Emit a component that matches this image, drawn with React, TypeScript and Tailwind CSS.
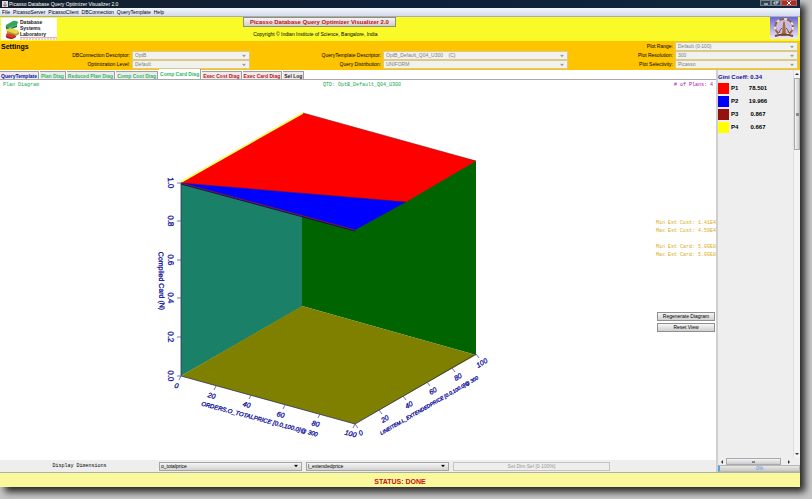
import { useState, type ReactNode } from 'react'
import clsx from 'clsx'

const menus = ['File', 'PicassoServer', 'PicassoClient', 'DBConnection', 'QueryTemplate', 'Help']

const tabs = [
  { name: 'QueryTemplate', color: 'text-[#1010b0]' },
  { name: 'Plan Diag', color: 'text-[#30b868]' },
  { name: 'Reduced Plan Diag', color: 'text-[#30b868]' },
  { name: 'Comp Cost Diag', color: 'text-[#30b868]' },
  { name: 'Comp Card Diag', color: 'text-[#30b868]' },
  { name: 'Exec Cost Diag', color: 'text-[#c81018]' },
  { name: 'Exec Card Diag', color: 'text-[#c81018]' },
  { name: 'Sel Log', color: 'text-[#401818]' },
]

const plans = [
  { name: 'P1', value: '78.501', color: 'bg-[#ff0000]' },
  { name: 'P2', value: '19.966', color: 'bg-[#0000ff]' },
  { name: 'P3', value: '0.867', color: 'bg-[#961010]' },
  { name: 'P4', value: '0.667', color: 'bg-[#ffff00]' },
]

const zTicks = [
  { label: '0.0', y: 376 },
  { label: '0.2', y: 337 },
  { label: '0.4', y: 298 },
  { label: '0.6', y: 260 },
  { label: '0.8', y: 221 },
  { label: '1.0', y: 183 },
]

const xTicks = [
  { label: '0', x: 181, y: 376 },
  { label: '20', x: 216, y: 386 },
  { label: '40', x: 251, y: 395 },
  { label: '60', x: 285, y: 405 },
  { label: '80', x: 320, y: 414 },
  { label: '100', x: 355, y: 424 },
]

const yTicks = [
  { label: '0', x: 355, y: 424 },
  { label: '20', x: 379, y: 410 },
  { label: '40', x: 403, y: 396 },
  { label: '60', x: 427, y: 382 },
  { label: '80', x: 452, y: 368 },
  { label: '100', x: 476, y: 354 },
]

function DropArrow({ className }: { className: string }) {
  return (
    <svg viewBox="0 0 6 4" className={clsx('pointer-events-none absolute right-1 top-1/2 h-[3px] w-[4px] -translate-y-1/2', className)}>
      <path d="M0 0h6L3 4z" fill="currentColor" />
    </svg>
  )
}

function Setting({ id, label, value }: { id: string; label: string; value: string }) {
  return (
    <>
      <label htmlFor={id} className="text-right">{label}</label>
      <div className="relative ml-[2px]">
        <select
          id={id}
          disabled
          className="block h-[9px] w-full appearance-none border border-[#d9c98a] bg-[#f1f1ee] pl-[2px] text-[5px] leading-[7px] text-[#808080] opacity-100"
        >
          <option>{value}</option>
        </select>
        <DropArrow className="text-[#999]" />
      </div>
    </>
  )
}

function DimensionSelect({ label, value }: { label: string; value: string }) {
  return (
    <div className="relative mr-1">
      <select
        aria-label={label}
        className="block h-[9px] w-full appearance-none border border-[#a5a5a5] bg-linear-to-b from-[#f4f4f4] to-[#d4d4d4] pl-[1px] text-[5px] leading-[7px] text-black"
      >
        <option>{value}</option>
      </select>
      <DropArrow className="text-black" />
    </div>
  )
}

function ActionButton({ children }: { children: ReactNode }) {
  return (
    <button className="h-[9px] border border-[#8f8f8f] bg-linear-to-b from-[#f6f6f6] to-[#d0d0d0] text-[5px] leading-[7px] text-black">
      {children}
    </button>
  )
}

function LabLogo() {
  return (
    <div className="flex h-[22px] w-[56px] items-center bg-white">
      <svg viewBox="0 0 19 21" className="h-[21px] w-[19px] shrink-0">
        <path d="M5 6l7-4q3-1 5 1l-1 3-8 3q-4 0-3-3z" fill="#35a55a" />
        <path d="M5 7q1 2 4 2l7-3v2l-8 3q-4 0-3-4z" fill="#187a3c" />
        <path d="M6 10l3-1 7 2q3 1 1 3l-2 1-8-2q-3-1-1-3z" fill="#e8d548" />
        <path d="M6 12l9 3 3-2v2l-3 2-9-3z" fill="#b29c20" />
        <path d="M6 14l8 2 1 2-4 2-5-1q-2-1-1-3z" fill="#d83a2a" />
        <path d="M5 17l6 2 4-2v1l-4 2-5-1z" fill="#9c1c18" />
      </svg>
      <div className="text-[5px] font-bold leading-[6px] text-[#222]">
        <div>Database</div>
        <div>Systems</div>
        <div>Laboratory</div>
        <svg viewBox="0 0 37 3" className="h-[3px] w-[37px]">
          <path d="M0 0h37" stroke="#d8604c" />
          <path d="M0 2h37" stroke="#c8a498" strokeDasharray="2 1" />
        </svg>
      </div>
    </div>
  )
}

function InstituteLogo() {
  return (
    <svg viewBox="0 0 28 22" className="h-[22px] w-[28px]">
      <defs>
        <linearGradient id="sky" x2="0" y2="1">
          <stop stopColor="#6868d8" />
          <stop offset="1" stopColor="#f4e8f8" />
        </linearGradient>
      </defs>
      <rect width="28" height="22" fill="url(#sky)" />
      <ellipse cx="14" cy="10" rx="9" ry="8" fill="#c8bce8" stroke="#94603c" strokeWidth="2" />
      <ellipse cx="14" cy="10" rx="9" ry="8" fill="none" stroke="#f0e4d0" strokeWidth="2" strokeDasharray="3 5" />
      <path d="M12 17l1-11 1-2 1 2 1 11z" fill="#a86c38" />
      <path d="M9 16q1-4 3-5M19 16q-1-4-3-5" fill="none" stroke="#805030" />
      <path d="M5 19q9-3 18 0" fill="none" stroke="#704838" strokeWidth="2" />
    </svg>
  )
}

function CubePlot() {
  return (
    <svg viewBox="150 95 340 350" className="h-[350px] w-[340px] shrink-0" fontFamily="'Liberation Sans', sans-serif">
      <path d="M181 183L303 113V306L181 376z" fill="#1a8068" />
      <path d="M302 120L476 161V355L302 306z" fill="#006400" />
      <path d="M181 376L302 306L476 355L355 424z" fill="#808000" />
      <path d="M181 183L303 113L476 161L406 202z" fill="#ff0000" />
      <path d="M181 183L406 202L355 230z" fill="#0000ff" />
      <path d="M181 182L303 113" stroke="#ffff50" strokeWidth="1.5" />
      <path d="M303 113L476 161" stroke="#8c1010" strokeWidth=".6" />
      <path d="M181 183L406 202" stroke="#4a1070" strokeWidth=".6" />
      <path d="M181 183L355 230" stroke="#801040" strokeWidth="1.2" />
      <path d="M181 184L355 231" stroke="#101060" strokeWidth="1" />
      <path d="M181 183V376L355 424L476 354" fill="none" stroke="#303060" strokeWidth=".8" />

      <g stroke="#5050a0" strokeWidth=".8">
        {zTicks.map(t => <path key={t.label} d={`M177 ${t.y}h4`} />)}
        {xTicks.map(t => <path key={t.label} d={`M${t.x} ${t.y}l-2 4`} />)}
        {yTicks.map(t => <path key={t.label} d={`M${t.x} ${t.y}l3 4`} />)}
      </g>

      <g fill="#1010a0" stroke="#1010a0" strokeWidth=".3" fontSize="8" textAnchor="middle">
        {zTicks.map(t => (
          <text key={t.label} transform={`translate(168 ${t.y}) rotate(87)`}>{t.label}</text>
        ))}
        {xTicks.map(t => (
          <text key={t.label} transform={`translate(${t.x - 5} ${t.y + 12}) rotate(15)`} fontSize="7" fontStyle="italic">{t.label}</text>
        ))}
        {yTicks.map(t => (
          <text key={t.label} transform={`translate(${t.x + 7} ${t.y + 11}) rotate(-30)`} fontSize="7" fontStyle="italic">{t.label}</text>
        ))}
        <text transform="translate(159 281) rotate(89)" fontSize="7">Compiled Card (N)</text>
        <text transform="translate(259 421) rotate(15)" fontSize="6" fontStyle="italic">ORDERS.O_TOTALPRICE [0.0,100.0]@ 300</text>
        <text transform="translate(430 407) rotate(-30)" fontSize="5" fontStyle="italic">LINEITEM.L_EXTENDEDPRICE [0.0,100.0]@ 300</text>
      </g>
    </svg>
  )
}

function PlanLegend() {
  return (
    <aside className="flex w-[84px] shrink-0 flex-col border-l-2 border-[#cfcfcf] bg-[#eeeeee]">
      <div className="flex flex-1">
        <div className="flex-1 text-[6px] font-bold">
          <div className="mt-[2px] leading-[11px] text-[#1010a0]">Gini Coeff: 0.34</div>
          <table className="border-separate border-spacing-0 leading-[11px] text-black">
            <tbody>
              {plans.map(plan => (
                <tr key={plan.name}>
                  <td className="pb-[2px]"><div className={clsx('h-[11px] w-[11px]', plan.color)} /></td>
                  <td className="w-[18px] pb-[2px] pl-[2px]">{plan.name}</td>
                  <td className="w-[22px] pb-[2px] text-center">{plan.value}</td>
                </tr>
              ))}
            </tbody>
          </table>
        </div>
        <div className="flex w-[7px] flex-col items-center justify-between border-l border-[#e0e0e0] bg-[#f4f4f4]">
          <div className="flex w-full flex-col items-center">
            <svg viewBox="0 0 6 8" className="h-[8px] w-[6px]"><path d="M1 5l2-2 2 2z" fill="#333" /></svg>
            <div className="flex h-[72px] w-full items-center justify-center border border-[#aaa] bg-linear-to-r from-[#f4f4f4] to-[#cbcbd0]">
              <div className="h-[3px] w-[3px] bg-[#888]" />
            </div>
          </div>
          <svg viewBox="0 0 6 8" className="h-[8px] w-[6px]"><path d="M1 3l2 2 2-2z" fill="#333" /></svg>
        </div>
      </div>
      <div className="flex h-[7px] items-center pr-[7px]">
        <svg viewBox="0 0 8 7" className="h-[7px] w-[8px]"><path d="M5 2v4L3 4z" fill="#333" /></svg>
        <div className="flex h-[7px] w-[55px] items-center justify-center border border-[#aaa] bg-linear-to-b from-[#f4f4f4] to-[#cbcbd0]">
          <div className="h-[2px] w-[3px] bg-[#888]" />
        </div>
        <div className="flex-1" />
        <svg viewBox="0 0 8 7" className="h-[7px] w-[8px]"><path d="M3 2v4l2-2z" fill="#333" /></svg>
      </div>
      <div className="h-[7px] border border-l-2 border-[#b8b8b8] border-l-[#58a8e0] bg-linear-to-b from-[#e8e8e8] to-[#c8c8c8] text-center text-[5px] leading-[5px] text-[#4898d8]">0%</div>
    </aside>
  )
}

export default function App() {
  const [activeTab, setActiveTab] = useState('Comp Card Diag')

  return (
    <div className="flex min-h-screen bg-[#c6c6c6] pr-3 pb-3 font-['Liberation_Sans',sans-serif] text-[5px] leading-[8px] text-black">
      <div className="flex min-w-0 flex-1 flex-col bg-white shadow-[5px_5px_7px_0_rgba(0,0,0,0.8)]">
        <header className="flex h-[8px] items-center bg-linear-to-r from-[#16202c] via-[#0c2038] to-[#10283c] pl-[2px] text-white">
          <svg viewBox="0 0 6 6" className="mr-[1px] h-[6px] w-[6px]">
            <path d="M0 0h6v6H0z" fill="#d8e0e8" />
            <path d="M3 1v2M1 4h4M2 5h2" stroke="#b05030" />
          </svg>
          <h1 className="flex-1">Picasso Database Query Optimizer Visualizer 2.0</h1>
          <div className="mr-[3px] flex h-[6px] self-start">
            <button aria-label="Minimize" className="flex w-[11px] items-center justify-center border border-[#70808c] bg-[#34444f]">
              <svg viewBox="0 0 6 4" className="h-[4px] w-[6px]"><path d="M1 3h4" stroke="white" /></svg>
            </button>
            <button aria-label="Restore" className="flex w-[10px] items-center justify-center border border-[#70808c] bg-[#34444f]">
              <svg viewBox="0 0 6 4" className="h-[4px] w-[6px]"><path d="M1 1h3v2H1zM3 0h2v2" fill="none" stroke="white" strokeWidth=".7" /></svg>
            </button>
            <button aria-label="Close" className="flex w-[16px] items-center justify-center border border-[#b06058] bg-[#b02c20]">
              <svg viewBox="0 0 6 4" className="h-[4px] w-[6px]"><path d="M1 0l4 4M5 0L1 4" stroke="white" /></svg>
            </button>
          </div>
        </header>

        <nav className="flex h-[9px] items-center gap-[3px] border-b border-[#a8acb8] bg-linear-to-b from-[#f4f6fc] to-[#d4daec] pl-[2px]">
          {menus.map(menu => <button key={menu}>{menu}</button>)}
        </nav>

        <div className="grid h-[24px] grid-cols-[3fr_auto_5fr] bg-[#fafa28] px-[1px]">
          <div className="pt-[1px]"><LabLogo /></div>
          <div className="flex flex-col items-center">
            <button className="h-[10px] border border-[#909070] bg-linear-to-b from-[#f4f4f4] to-[#d0d0d0] px-[6px] text-[6px] font-bold leading-[8px] text-[#c81018]">
              Picasso Database Query Optimizer Visualizer 2.0
            </button>
            <div className="mt-[3px] pr-2">Copyright © Indian Institute of Science, Bangalore, India</div>
          </div>
          <div className="flex justify-end pr-[1px]"><InstituteLogo /></div>
        </div>

        <form className="grid h-[29px] grid-cols-[130fr_120fr_131fr_187fr_105fr_125fr] content-start bg-[#ffc400] pt-[1px] pr-[2px] leading-[9px]">
          <h2 className="col-span-4 pl-[1px] text-[7px] font-bold">Settings</h2>
          <Setting id="range" label="Plot Range:" value="Default (0-100)" />
          <Setting id="connection" label="DBConnection Descriptor:" value="OptB" />
          <Setting id="template" label="QueryTemplate Descriptor:" value={'OptB_Default_Q04_U300\u00a0\u00a0\u00a0\u00a0(C)'} />
          <Setting id="resolution" label="Plot Resolution:" value="300" />
          <Setting id="level" label="Optimization Level:" value="Default" />
          <Setting id="distribution" label="Query Distribution:" value="UNIFORM" />
          <Setting id="selectivity" label="Plot Selectivity:" value="Picasso" />
        </form>

        <div className="flex flex-1">
          <main className="flex min-w-0 flex-1 flex-col">
            <div role="tablist" className="flex h-[10px] items-end gap-[1px] border-b border-[#a8a8a8] bg-white">
              {tabs.map(tab => (
                <button
                  key={tab.name}
                  role="tab"
                  aria-selected={tab.name === activeTab}
                  onClick={() => setActiveTab(tab.name)}
                  className={clsx(
                    'border-r border-[#a0a0a0] px-[1px] font-bold',
                    tab.color,
                    tab.name === activeTab ? 'h-[10px] bg-white' : 'h-[8px] border-t bg-[#ececec]'
                  )}
                >
                  {tab.name}
                </button>
              ))}
            </div>

            <div className="grid grid-cols-3 px-[3px] pt-[1px] font-['Liberation_Mono',monospace]">
              <div className="text-[#10a848]">Plan Diagram</div>
              <div className="pl-2 text-center text-[#10a848]">QTD: OptB_Default_Q04_U300</div>
              <div className="text-right text-[#b800b8]"># of Plans: 4</div>
            </div>

            <div className="flex flex-1 items-start pt-[6px]">
              <div className="flex-2" />
              <CubePlot />
              <div className="flex flex-3 flex-col items-end pt-[124px]">
                <div className="font-['Liberation_Mono',monospace] text-[#d8ac10]">
                  <div>Min Est Cost: 1.41E4</div>
                  <div>Max Est Cost: 4.59E4</div>
                  <div className="mt-2">Min Est Card: 5.00E0</div>
                  <div>Max Est Card: 5.00E0</div>
                </div>
                <div className="mt-[53px] mr-[1px] flex w-[58px] flex-col gap-[2px]">
                  <ActionButton>Regenerate Diagram</ActionButton>
                  <ActionButton>Reset View</ActionButton>
                </div>
              </div>
            </div>

            <div className="grid h-[12px] grid-cols-[159fr_147fr_147fr_157fr_106fr] items-center bg-[#eeeeee]">
              <div className="text-center font-['Liberation_Mono',monospace]">Display Dimensions</div>
              <DimensionSelect label="First dimension" value="o_totalprice" />
              <DimensionSelect label="Second dimension" value="l_extendedprice" />
              <button disabled className="h-[9px] border border-[#c4c4c4] leading-[7px] text-[#999]">Set Dim Sel [0-100%]</button>
            </div>
          </main>
          <PlanLegend />
        </div>

        <footer className="h-[15px] border-t border-[#b0b0a0] bg-[#faf89c] pt-[5px] text-center text-[7px] font-bold text-[#c81010]">
          STATUS: DONE
        </footer>
      </div>
    </div>
  )
}
